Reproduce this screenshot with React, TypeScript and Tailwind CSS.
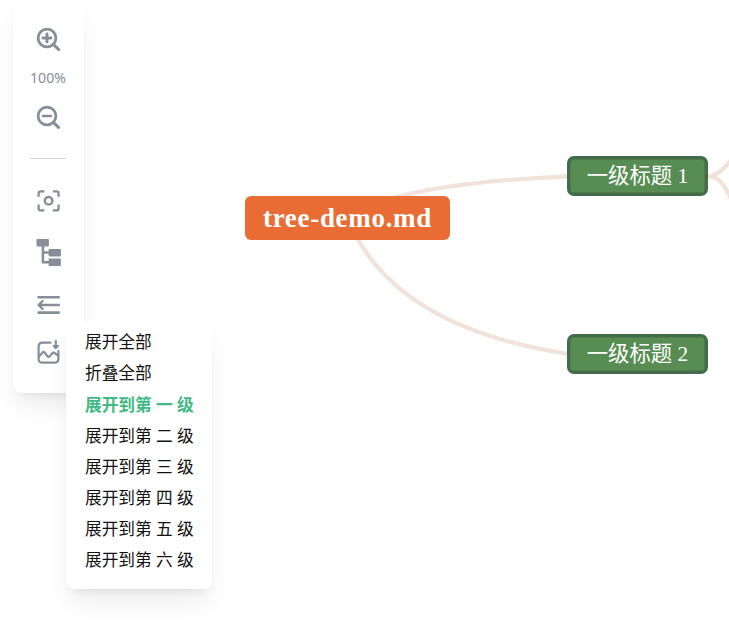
import type { ReactNode } from 'react';

const levels = ['一', '二', '三', '四', '五', '六'];

function Icon({ children, className }: { children: ReactNode; className?: string }) {
  return (
    <svg
      viewBox="0 0 28 28"
      fill="none"
      stroke="currentColor"
      strokeWidth="2.4"
      strokeLinecap="round"
      strokeLinejoin="round"
      className={`size-7 shrink-0 ${className ?? ''}`}
    >
      {children}
    </svg>
  );
}

function Toolbar() {
  return (
    <div className="flex h-[393px] w-[71px] flex-col items-center rounded-[9px] bg-white pr-px pt-[26px] text-[#868e9a] shadow-[0_16px_24px_-4px_rgba(0,0,0,0.08),0_6px_10px_-6px_rgba(0,0,0,0.1)]">
      <Icon>
        <circle cx="13" cy="12" r="8.9" strokeWidth="2.8" />
        <path d="M19.3 18.3 24.6 23.4" strokeWidth="3" />
        <path d="M9 12h8M13 8v8" strokeWidth="2.9" />
      </Icon>
      <span className="mt-[14px] font-['Noto_Sans',sans-serif] text-[14.1px] leading-5">100%</span>
      <Icon className="mt-4">
        <circle cx="13" cy="12" r="8.9" strokeWidth="2.8" />
        <path d="M19.3 18.3 24.6 23.4" strokeWidth="3" />
        <path d="M9 12h8" strokeWidth="2.6" />
      </Icon>
      <div className="mt-[26px] h-px w-9 bg-[#d0d1d3]" />
      <Icon className="mt-7">
        <path d="M4.6 9.8V6.6q0-2.2 2.2-2.2H10.4M18.8 4.4H22.4q2.2 0 2.2 2.2V9.8M24.6 17.6v3.6q0 2.2-2.2 2.2H18.8M10.4 23.4H6.8q-2.2 0-2.2-2.2V17.6" strokeWidth="2.3" strokeLinecap="butt" />
        <circle cx="14.6" cy="13.7" r="3.8" strokeWidth="2.5" />
      </Icon>
      <Icon className="mt-6">
        <path d="M8.9 7v16.3h8M8.9 13.5h8" strokeWidth="2.6" />
        <g fill="currentColor" stroke="none">
          <rect x="2.5" y="0" width="12.4" height="7.6" rx="0.8" />
          <rect x="14.6" y="10" width="12.3" height="7.4" rx="0.8" />
          <rect x="14.6" y="19.6" width="12.3" height="7.4" rx="0.8" />
        </g>
      </Icon>
      <Icon className="mt-6">
        <path d="M4.5 6.3h20.2M6.5 14h18.2M4.5 21.6h20.2" strokeWidth="2.6" />
        <path d="M8.6 10 4.6 14l4 4" strokeWidth="2.4" />
        <path d="M8 11.5 5.5 14 8 16.5Z" fill="currentColor" stroke="none" />
      </Icon>
      <Icon className="mt-5">
        <path d="M16.5 3.7H8.6q-4 0-4 4v12q0 4 4 4h11.8q4 0 4-4v-7.5" strokeWidth="2.2" />
        <path d="m5 17.4 3.6-3.9q1-1 2 0l3 3.9q1 1 2 0l2.9-3.4q1-1 2 0l3.6 2.5" strokeWidth="2.2" />
        <path d="M21.8 2.2v6" strokeWidth="2.2" />
        <path d="m19.2 6.8 2.6 2.6 2.6-2.6Z" fill="currentColor" strokeWidth="1.4" />
      </Icon>
    </div>
  );
}

function ExpandMenu() {
  return (
    <div className="absolute left-[66px] top-[321px] flex h-[268px] w-[146px] flex-col rounded-lg bg-white pl-[19px] pt-[5px] font-['Noto_Sans','Noto_Sans_CJK_SC',sans-serif] text-[16.7px] leading-[31px] text-[#111] shadow-[0_16px_24px_-4px_rgba(0,0,0,0.08),0_6px_10px_-6px_rgba(0,0,0,0.1)]">
      <span>展开全部</span>
      <span className="mb-px">折叠全部</span>
      {levels.map((level, i) => (
        <span key={level} className={i === 0 ? 'font-bold text-[#42b983]' : ''}>
          展开到第 {level} 级
        </span>
      ))}
    </div>
  );
}

function MindMap() {
  return (
    <div className="absolute inset-0 font-['Liberation_Serif','Noto_Sans_CJK_SC',serif] text-white">
      <svg viewBox="0 0 729 631" className="absolute inset-0 size-full" fill="none" stroke="#f1e3da" strokeWidth="4.3">
        <path d="M347.5 218Q391.6 184.4 568 176.3M347.5 218Q391.6 326.8 568 354" />
        <path d="M708 176.3C719 175 723 169 734 157M708 176.3C720 177 724 184 733 203" />
      </svg>
      <div className="absolute left-[245px] top-[196px] flex h-11 w-[205px] items-center justify-center rounded-md bg-[#e86c33] text-[27px] font-bold tracking-[0.7px]">
        tree-demo.md
      </div>
      <div className="absolute left-[567px] top-[156px] flex h-10 w-[141px] items-center justify-center rounded-[7px] border-[3px] border-[#446b4a] bg-[#578d53] pt-px text-[21.4px] leading-none shadow-[inset_0_0_0_0.5px_#446b4a]">
        一级标题 1
      </div>
      <div className="absolute left-[567px] top-[334px] flex h-10 w-[141px] items-center justify-center rounded-[7px] border-[3px] border-[#446b4a] bg-[#578d53] pt-px text-[21.4px] leading-none shadow-[inset_0_0_0_0.5px_#446b4a]">
        一级标题 2
      </div>
    </div>
  );
}

export default function App() {
  return (
    <main className="relative h-[631px] w-[729px] overflow-hidden bg-white">
      <MindMap />
      <div className="relative flex pl-[13px]">
        <Toolbar />
      </div>
      <ExpandMenu />
    </main>
  );
}
